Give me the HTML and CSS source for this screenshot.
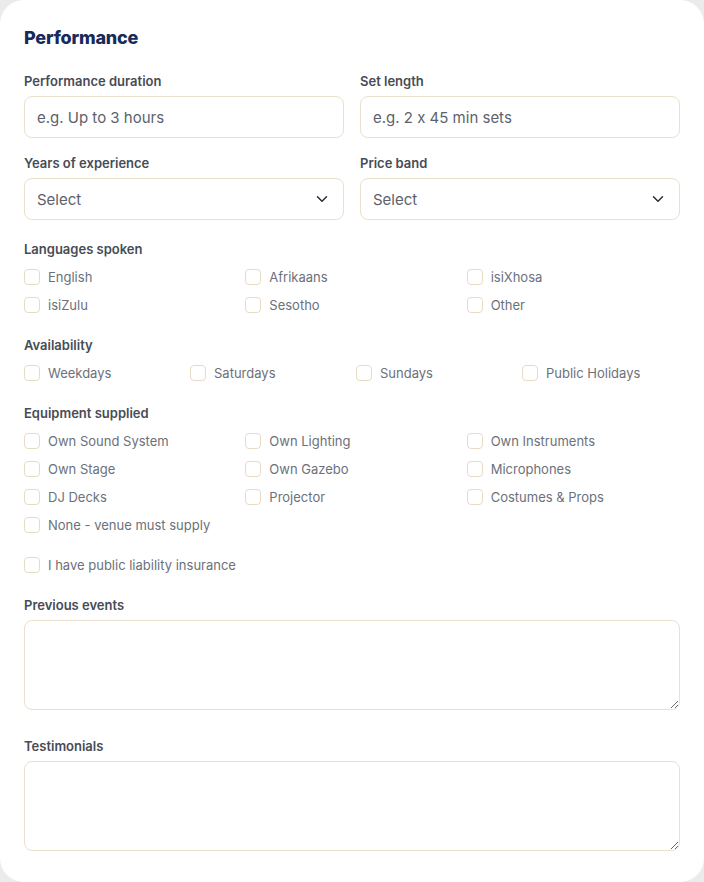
FILE: index.html
```html
<!DOCTYPE html>
<html lang="en">
<head>
  <meta charset="UTF-8" />
  <meta name="viewport" content="width=device-width, initial-scale=1.0"/>
  <title>Performance</title>
  <link rel="stylesheet" href="styles.css">
</head>
<body>

  <div class="card">
    <h2 class="title">Performance</h2>

    <div class="row">
      <div class="field">
        <label class="label">Performance duration</label>
        <input class="input" type="text" placeholder="e.g. Up to 3 hours">
      </div>
      <div class="field">
        <label class="label">Set length</label>
        <input class="input" type="text" placeholder="e.g. 2 x 45 min sets">
      </div>
    </div>

    <div class="row">
      <div class="field">
        <label class="label">Years of experience</label>
        <div class="select">
          <span>Select</span>
          <svg width="18" height="18" viewBox="0 0 24 24" fill="none" stroke="#2b2f36" stroke-width="2" stroke-linecap="round" stroke-linejoin="round"><path d="M6 9l6 6 6-6"/></svg>
        </div>
      </div>
      <div class="field">
        <label class="label">Price band</label>
        <div class="select">
          <span>Select</span>
          <svg width="18" height="18" viewBox="0 0 24 24" fill="none" stroke="#2b2f36" stroke-width="2" stroke-linecap="round" stroke-linejoin="round"><path d="M6 9l6 6 6-6"/></svg>
        </div>
      </div>
    </div>

    <div class="group">
      <div class="label">Languages spoken</div>
      <div class="checks cols-3">
        <label class="check"><span class="box"></span>English</label>
        <label class="check"><span class="box"></span>Afrikaans</label>
        <label class="check"><span class="box"></span>isiXhosa</label>
        <label class="check"><span class="box"></span>isiZulu</label>
        <label class="check"><span class="box"></span>Sesotho</label>
        <label class="check"><span class="box"></span>Other</label>
      </div>
    </div>

    <div class="group">
      <div class="label">Availability</div>
      <div class="checks cols-4">
        <label class="check"><span class="box"></span>Weekdays</label>
        <label class="check"><span class="box"></span>Saturdays</label>
        <label class="check"><span class="box"></span>Sundays</label>
        <label class="check"><span class="box"></span>Public Holidays</label>
      </div>
    </div>

    <div class="group">
      <div class="label">Equipment supplied</div>
      <div class="checks cols-3">
        <label class="check"><span class="box"></span>Own Sound System</label>
        <label class="check"><span class="box"></span>Own Lighting</label>
        <label class="check"><span class="box"></span>Own Instruments</label>
        <label class="check"><span class="box"></span>Own Stage</label>
        <label class="check"><span class="box"></span>Own Gazebo</label>
        <label class="check"><span class="box"></span>Microphones</label>
        <label class="check"><span class="box"></span>DJ Decks</label>
        <label class="check"><span class="box"></span>Projector</label>
        <label class="check"><span class="box"></span>Costumes &amp; Props</label>
        <label class="check"><span class="box"></span>None - venue must supply</label>
      </div>
    </div>

    <label class="check single"><span class="box"></span>I have public liability insurance</label>

    <div class="text-field">
      <label class="label">Previous events</label>
      <textarea class="area"></textarea>
    </div>

    <div class="text-field">
      <label class="label">Testimonials</label>
      <textarea class="area"></textarea>
    </div>
  </div>

</body>
</html>
```

FILE: styles.css
```css
body {
  margin: 0;
  background: #ebebeb;
  font-family: Inter, "Noto Sans", sans-serif;
  font-feature-settings: "calt" 0;
}
.card {
  width: 704px;
  height: 882px;
  box-sizing: border-box;
  background: #ffffff;
  border-radius: 24px;
  padding: 24px 24px 0;
}
.title {
  margin: 0 0 20px;
  font-size: 18px;
  line-height: 28px;
  font-weight: 800;
  color: #172a5a;
  letter-spacing: -0.2px;
}
.row {
  display: grid;
  grid-template-columns: 1fr 1fr;
  gap: 16px;
  margin-bottom: 16px;
}
.row + .group {
  margin-top: 20px;
}
.field {
  display: flex;
  flex-direction: column;
}
.label {
  display: block;
  font-size: 13px;
  line-height: 18px;
  font-weight: 600;
  color: #474c55;
  margin-bottom: 6px;
}
.group .label {
  margin-bottom: 8px;
}
.input, .select {
  box-sizing: border-box;
  height: 42px;
  width: 100%;
  border: 1px solid #e9e1cd;
  border-radius: 8px;
  background: #ffffff;
  padding: 0 12px;
  font-family: inherit;
  font-feature-settings: "calt" 0;
  font-size: 15px;
  color: #5c626c;
  outline: none;
}
.input::placeholder {
  color: #5c626c;
}
.select {
  display: flex;
  align-items: center;
  justify-content: space-between;
  padding-right: 12px;
}
.group {
  margin-bottom: 20px;
}
.checks {
  display: grid;
  column-gap: 8px;
  row-gap: 6px;
}
.cols-3 { grid-template-columns: repeat(3, 1fr); }
.cols-4 { grid-template-columns: repeat(4, 1fr); }
.check {
  display: flex;
  align-items: center;
  gap: 8px;
  height: 22px;
  font-size: 13px;
  color: #6b717b;
}
.box {
  width: 14px;
  height: 14px;
  border: 1px solid #e6dcc6;
  border-radius: 4px;
  background: #ffffff;
  flex: none;
}
.single {
  margin-top: -2px;
  margin-bottom: 20px;
}
.text-field + .text-field {
  margin-top: 27px;
}
.area {
  display: block;
  box-sizing: border-box;
  width: 100%;
  height: 90px;
  border: 1px solid #e9e1cd;
  border-radius: 8px;
  background: #ffffff;
  font-family: inherit;
  outline: none;
}
```
